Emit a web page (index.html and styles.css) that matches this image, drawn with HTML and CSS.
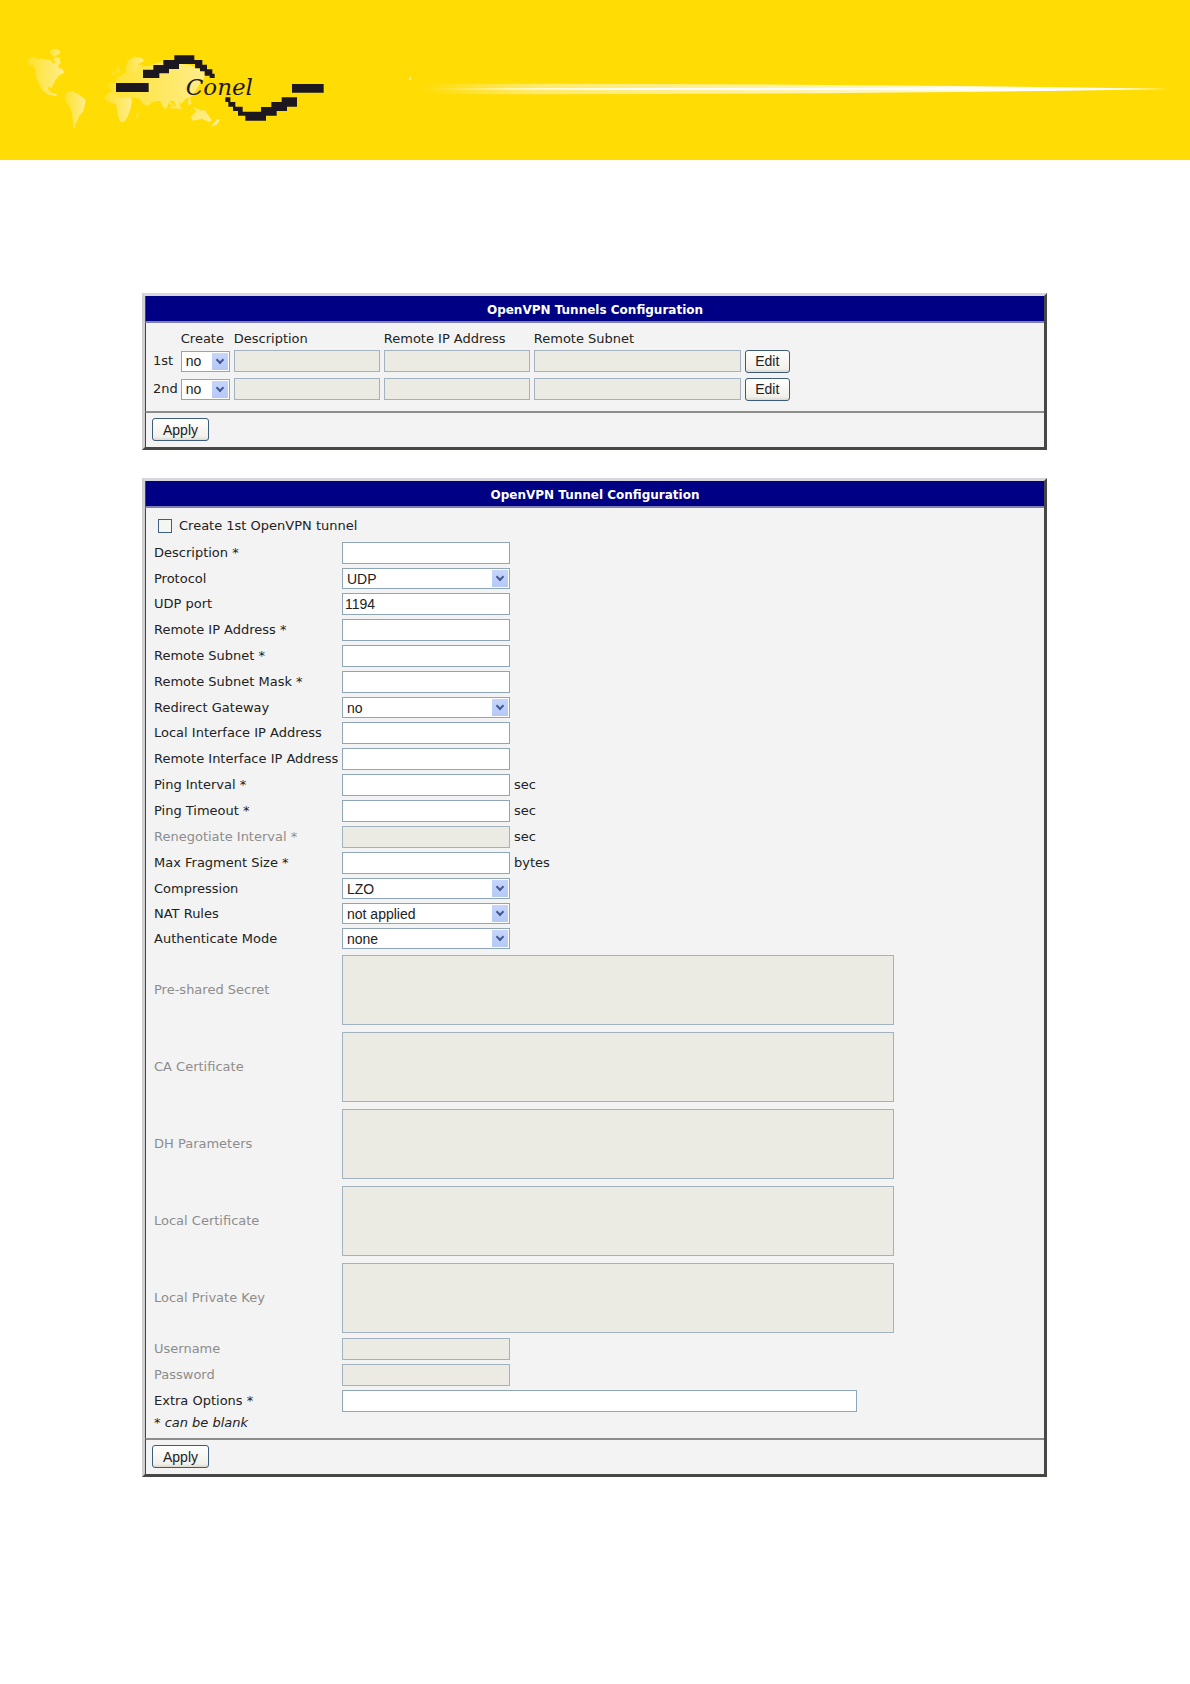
FILE: index.html
```html
<!DOCTYPE html>
<html lang="en">
<head>
    <meta charset="UTF-8">
    <meta name="viewport" content="width=device-width, initial-scale=1.0">
    <title>OpenVPN Tunnel Configuration</title>
    <link rel="stylesheet" href="styles.css">
</head>
<body>
    <header class="banner">
        <svg class="logo" viewBox="0 0 1200 480" role="img" aria-label="Conel">
            <defs>
                <linearGradient id="land" x1="0" y1="0" x2="1" y2="0">
                    <stop offset="0" stop-color="#ffe22e"/>
                    <stop offset="1" stop-color="#ffed8c"/>
                </linearGradient>
            </defs>
            <!-- world map -->
            <g fill="url(#land)">
                <path d="M84 178l14-8 10 6 18 0 24 4 12 12 8-8 8 6-4 12 12 4 8 12-14 6-12 14-8 14-4 12-12-4 2 12 12 8 14 2-4 6-22-4-18-12-12-22-8-18-2-24-8-14-12 2z"/>
                <path d="M148 152l16-6 16 6 0 8-16 10-10-4zM158 178l10-8 10 4 4 16-8 4z"/>
                <path d="M194 288l6-12 20-2 14 8 22 16 0 12-6 24-14 16-6 18-6 8 4 10-8-4-4-44-10-22-10-14z"/>
                <path d="M314 290l16-14 30-4 24 8 12 18-4 26-8 24-12 18-12 0-8-28-4-26-24-6-10-8z"/>
                <path d="M326 260l2-12 16 0 6-14 14-8 16-10 20-14 18-8 22 6 32-12 24-4 36 6 40 6 30 14 16 12-8 14-14 22-20 30-20 10-18 8 4 22-12-6-8-20-14 2-8 22-10-2-10-22-24 4-12 12-14-6-12-16-18-4-28 2-16 0z"/>
                <path d="M376 204l8-22 18-12 24 4 6 10-14 6-8 18-10 16-8-10-14 6z"/>
                <path d="M348 206l8-4 6 14-10 4zM336 218l8-4 2 8-8 4zM500 300l14 8 12 12-8 0zM530 296l16-10 8 14-10 12zM564 300l6-10 4 22-8 4zM508 320h30l10 6-36-1zM578 322l24 8-10 6zM572 350l18-16 24-4 10 14 12 18-10 4-20-10-28 6zM652 356l8 4-10 14-18 6zM410 340l6-2-2 14-6 4z"/>
            </g>
            <g fill="#1d1820">
                <path d="M348 249H446V276H348zM876 252H971V278H876z"/>
                <path d="M429 234V209H460V195H490V180H523V166H583V180H607V194H621V208H637V221H644V234H629V227H614V214H600V205H585V192H537V207H507V220H478V234z"/>
                <path d="M676 292H691V306H706V320H728V335H783V321H814V306H845V292H891V320H861V333H830V347H798V362H736V347H714V333H699V320H685V306H676z"/>
                <text class="logo-text" x="658" y="284" text-anchor="middle">Conel</text>
            </g>
        </svg>
        <svg class="swoosh" viewBox="0 0 790 160" preserveAspectRatio="none" aria-hidden="true">
            <defs>
                <linearGradient id="glow" x1="0" y1="0" x2="1" y2="0">
                    <stop offset="0" stop-color="#fff" stop-opacity="0"/>
                    <stop offset=".15" stop-color="#fff" stop-opacity=".4"/>
                    <stop offset=".6" stop-color="#fff" stop-opacity=".75"/>
                    <stop offset=".8" stop-color="#fff"/>
                </linearGradient>
                <linearGradient id="core" x1="0" y1="0" x2="1" y2="0">
                    <stop offset="0" stop-color="#fff" stop-opacity=".2"/>
                    <stop offset=".3" stop-color="#fff"/>
                </linearGradient>
            </defs>
            <path fill="url(#glow)" d="M22 84Q420 83 769 89Q420 95 22 94z"/>
            <path fill="url(#core)" d="M14 89L120 88L520 88L769 89L520 90L120 90z"/>
            <path fill="#fff3a0" d="M9 80l2-4v4z"/>
        </svg>
    </header>

    <main>
        <form class="panel">
            <h2>OpenVPN Tunnels Configuration</h2>
            <table class="tunnels">
                <thead>
                    <tr>
                        <th></th>
                        <th>Create</th>
                        <th>Description</th>
                        <th>Remote IP Address</th>
                        <th>Remote Subnet</th>
                        <th></th>
                    </tr>
                </thead>
                <tbody>
                    <tr>
                        <td><label for="create1">1st</label></td>
                        <td><span class="select small"><select id="create1"><option>no</option><option>yes</option></select></span></td>
                        <td><input type="text" class="medium" aria-label="1st description" disabled></td>
                        <td><input type="text" class="medium" aria-label="1st remote IP address" disabled></td>
                        <td><input type="text" class="large" aria-label="1st remote subnet" disabled></td>
                        <td><button type="button" class="edit">Edit</button></td>
                    </tr>
                    <tr>
                        <td><label for="create2">2nd</label></td>
                        <td><span class="select small"><select id="create2"><option>no</option><option>yes</option></select></span></td>
                        <td><input type="text" class="medium" aria-label="2nd description" disabled></td>
                        <td><input type="text" class="medium" aria-label="2nd remote IP address" disabled></td>
                        <td><input type="text" class="large" aria-label="2nd remote subnet" disabled></td>
                        <td><button type="button" class="edit">Edit</button></td>
                    </tr>
                </tbody>
            </table>
            <div class="actions">
                <button type="submit">Apply</button>
            </div>
        </form>

        <form class="panel">
            <h2>OpenVPN Tunnel Configuration</h2>
            <div class="fields">
                <div class="check">
                    <input type="checkbox" id="create">
                    <label for="create">Create 1st OpenVPN tunnel</label>
                </div>
                <div class="row">
                    <label for="description">Description *</label>
                    <input type="text" id="description">
                </div>
                <div class="row row-select">
                    <label for="protocol">Protocol</label>
                    <span class="select"><select id="protocol"><option>UDP</option></select></span>
                </div>
                <div class="row">
                    <label for="port">UDP port</label>
                    <input type="text" id="port" value="1194">
                </div>
                <div class="row">
                    <label for="remoteIp">Remote IP Address *</label>
                    <input type="text" id="remoteIp">
                </div>
                <div class="row">
                    <label for="subnet">Remote Subnet *</label>
                    <input type="text" id="subnet">
                </div>
                <div class="row">
                    <label for="mask">Remote Subnet Mask *</label>
                    <input type="text" id="mask">
                </div>
                <div class="row row-select">
                    <label for="gateway">Redirect Gateway</label>
                    <span class="select"><select id="gateway"><option>no</option><option>yes</option></select></span>
                </div>
                <div class="row">
                    <label for="localIf">Local Interface IP Address</label>
                    <input type="text" id="localIf">
                </div>
                <div class="row">
                    <label for="remoteIf">Remote Interface IP Address</label>
                    <input type="text" id="remoteIf">
                </div>
                <div class="row">
                    <label for="pingInterval">Ping Interval *</label>
                    <input type="text" id="pingInterval">
                    <span class="unit">sec</span>
                </div>
                <div class="row">
                    <label for="pingTimeout">Ping Timeout *</label>
                    <input type="text" id="pingTimeout">
                    <span class="unit">sec</span>
                </div>
                <div class="row">
                    <label for="renegotiate" class="off">Renegotiate Interval *</label>
                    <input type="text" id="renegotiate" disabled>
                    <span class="unit">sec</span>
                </div>
                <div class="row">
                    <label for="fragment">Max Fragment Size *</label>
                    <input type="text" id="fragment">
                    <span class="unit">bytes</span>
                </div>
                <div class="row row-select">
                    <label for="compression">Compression</label>
                    <span class="select"><select id="compression"><option>LZO</option></select></span>
                </div>
                <div class="row row-select">
                    <label for="nat">NAT Rules</label>
                    <span class="select"><select id="nat"><option>not applied</option></select></span>
                </div>
                <div class="row row-select">
                    <label for="auth">Authenticate Mode</label>
                    <span class="select"><select id="auth"><option>none</option></select></span>
                </div>
                <div class="row row-area">
                    <label for="secret" class="off">Pre-shared Secret</label>
                    <textarea id="secret" disabled></textarea>
                </div>
                <div class="row row-area">
                    <label for="ca" class="off">CA Certificate</label>
                    <textarea id="ca" disabled></textarea>
                </div>
                <div class="row row-area">
                    <label for="dh" class="off">DH Parameters</label>
                    <textarea id="dh" disabled></textarea>
                </div>
                <div class="row row-area">
                    <label for="cert" class="off">Local Certificate</label>
                    <textarea id="cert" disabled></textarea>
                </div>
                <div class="row row-area">
                    <label for="key" class="off">Local Private Key</label>
                    <textarea id="key" disabled></textarea>
                </div>
                <div class="row">
                    <label for="username" class="off">Username</label>
                    <input type="text" id="username" disabled>
                </div>
                <div class="row">
                    <label for="password" class="off">Password</label>
                    <input type="password" id="password" disabled>
                </div>
                <div class="row">
                    <label for="extra">Extra Options *</label>
                    <input type="text" id="extra" class="wide">
                </div>
                <p class="note">* can be blank</p>
            </div>
            <div class="actions">
                <button type="submit">Apply</button>
            </div>
        </form>
    </main>
</body>
</html>
```

FILE: styles.css
```css
body {
    margin: 0;
    background-color: #fff;
    color: #222;
    font-family: "DejaVu Sans", Verdana, sans-serif;
    font-size: 13px;
    line-height: 16px;
}

.banner {
    display: flex;
    height: 160px;
    background-color: #ffdc04;
}

.logo {
    width: 400px;
    height: 160px;
}

.logo-text {
    font-family: "DejaVu Serif", serif;
    font-style: italic;
    font-size: 69px;
}

.swoosh {
    flex: 1;
    min-width: 0;
    height: 160px;
}

main {
    padding: 133px 143px 60px 142px;
}

.panel {
    margin-bottom: 28px;
    background-color: #f3f3f3;
    border: 3px solid;
    border-color: #d6d6dc #464846 #464846 #d0d0d0;
}

.panel h2 {
    margin: 0;
    padding: 6px 0 3px;
    background-color: #000084;
    border-left: 1px solid #444;
    border-bottom: 2px solid #8080b0;
    color: #fff;
    font-size: 12px;
    line-height: 16px;
    text-align: center;
}

.tunnels {
    width: 100%;
    padding: 8px 6px 8px 7px;
    border-left: 1px solid #444;
    border-spacing: 0;
    box-sizing: border-box;
}

.tunnels th {
    height: 16px;
    padding: 0 4px 0 0;
    font-weight: normal;
    text-align: left;
    white-space: nowrap;
}

.tunnels td {
    height: 28px;
    padding: 0 4px 0 0;
    line-height: 0;
}

.tunnels th:first-child,
.tunnels td:first-child {
    width: 24px;
    padding-right: 3px;
    line-height: 16px;
}

.tunnels td:last-child {
    width: 100%;
}

input,
select,
textarea,
button {
    box-sizing: border-box;
    margin: 0;
    color: #222;
    font-family: "Liberation Sans", Arial, sans-serif;
    font-size: 14px;
}

input[type="text"],
input[type="password"],
textarea {
    width: 168px;
    height: 22px;
    padding: 0 2px;
    background-color: #fff;
    border: 1px solid #8fa5b8;
    border-radius: 0;
}

input[type="text"]:disabled,
input[type="password"]:disabled,
textarea:disabled {
    background-color: #ebeae3;
    border-color: #a2b2be;
}

input.medium[type="text"] {
    width: 146px;
}

input.large[type="text"] {
    width: 207px;
}

input.wide[type="text"] {
    width: 515px;
}

textarea,
textarea:disabled {
    width: 552px;
    height: 70px;
    resize: none;
}

.select {
    position: relative;
    display: inline-block;
    width: 168px;
    height: 21px;
}

.select.small {
    width: 49px;
}

.select select {
    width: 100%;
    height: 21px;
    padding: 0 18px 0 4px;
    appearance: none;
    background: linear-gradient(#c6d5fb, #b5c9f5) right 1px center / 16px 17px no-repeat #fff;
    border: 1px solid #8fa5b8;
    border-radius: 0;
}

/* dropdown arrow */
.select::after {
    content: "";
    position: absolute;
    top: 6px;
    right: 7px;
    width: 4px;
    height: 4px;
    border: solid #435a94;
    border-width: 0 2px 2px 0;
    transform: rotate(45deg);
    pointer-events: none;
}

button {
    height: 23px;
    padding: 0 10px;
    background: linear-gradient(#fff, #f1f0ea 85%, #dcd8ce);
    border: 1px solid #3d5c7c;
    border-radius: 3px;
}

button.edit {
    width: 45px;
    padding: 0;
}

.actions {
    padding: 5px 6px 6px;
    border-top: 2px solid #8c8c8c;
    border-left: 1px solid #444;
    line-height: 0;
}

.fields {
    padding: 6px 8px;
    border-left: 1px solid #444;
}

.check {
    display: flex;
    align-items: center;
    height: 24px;
    margin-bottom: 2px;
    padding-left: 4px;
    gap: 7px;
}

.check input {
    width: 14px;
    height: 14px;
    appearance: none;
    background-color: #f5f5f2;
    border: 1px solid #3d6080;
}

.row {
    display: flex;
    align-items: center;
    height: 26px;
}

.row label {
    flex: 0 0 188px;
    white-space: nowrap;
}

.row-select {
    height: 25px;
}

.row-area {
    height: 77px;
}

.unit {
    margin-left: 4px;
}

.off {
    color: #8d8d8d;
}

.note {
    margin: 0;
    font-style: italic;
    line-height: 18px;
}
```
